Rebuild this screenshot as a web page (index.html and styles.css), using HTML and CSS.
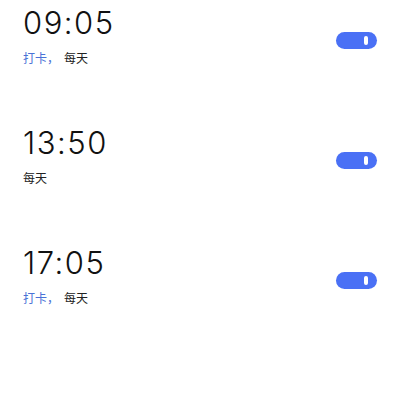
FILE: index.html
```html
<!DOCTYPE html>
<html lang="zh">
<head>
<meta charset="utf-8">
<link rel="stylesheet" href="styles.css">
</head>
<body>
<ul class="alarms">
  <li class="alarm">
    <div class="info">
      <div class="time">09:05</div>
      <div class="sub"><span class="tag">打卡，</span>每天</div>
    </div>
    <span class="switch"><span class="knob"></span></span>
  </li>
  <li class="alarm">
    <div class="info">
      <div class="time">13:50</div>
      <div class="sub">每天</div>
    </div>
    <span class="switch"><span class="knob"></span></span>
  </li>
  <li class="alarm">
    <div class="info">
      <div class="time">17:05</div>
      <div class="sub"><span class="tag">打卡，</span>每天</div>
    </div>
    <span class="switch"><span class="knob"></span></span>
  </li>
</ul>
</body>
</html>
```
FILE: styles.css
```css
html, body {
  margin: 0;
  padding: 0;
  background: #ffffff;
}
body {
  width: 400px;
  height: 400px;
  overflow: hidden;
  font-family: Inter, "Noto Sans CJK SC", sans-serif;
  color: #111111;
}
.alarms {
  list-style: none;
  margin: 0;
  padding: 0 23px 0 23px;
}
.alarm {
  display: flex;
  align-items: center;
  justify-content: space-between;
  height: 120px;
  margin-top: -25px;
  margin-bottom: 25px;
}
.info {
  display: flex;
  flex-direction: column;
}
.time {
  font-family: Inter, Roboto, sans-serif;
  font-weight: 300;
  font-size: 31px;
  line-height: 36px;
  letter-spacing: 1.5px;
  color: #111111;
}
.sub {
  margin-top: 9px;
  font-family: "Noto Sans CJK SC", sans-serif;
  font-size: 12px;
  line-height: 16px;
  color: #222222;
}
.tag {
  margin-right: 5px;
  color: #4a72d6;
}
.switch {
  display: flex;
  align-items: center;
  justify-content: flex-end;
  box-sizing: border-box;
  width: 41px;
  height: 17px;
  margin-top: 10px;
  padding-right: 9px;
  border-radius: 9px;
  background: #4a70f5;
}
.knob {
  display: block;
  width: 4px;
  height: 9px;
  border-radius: 2px;
  background: #ffffff;
}
```
